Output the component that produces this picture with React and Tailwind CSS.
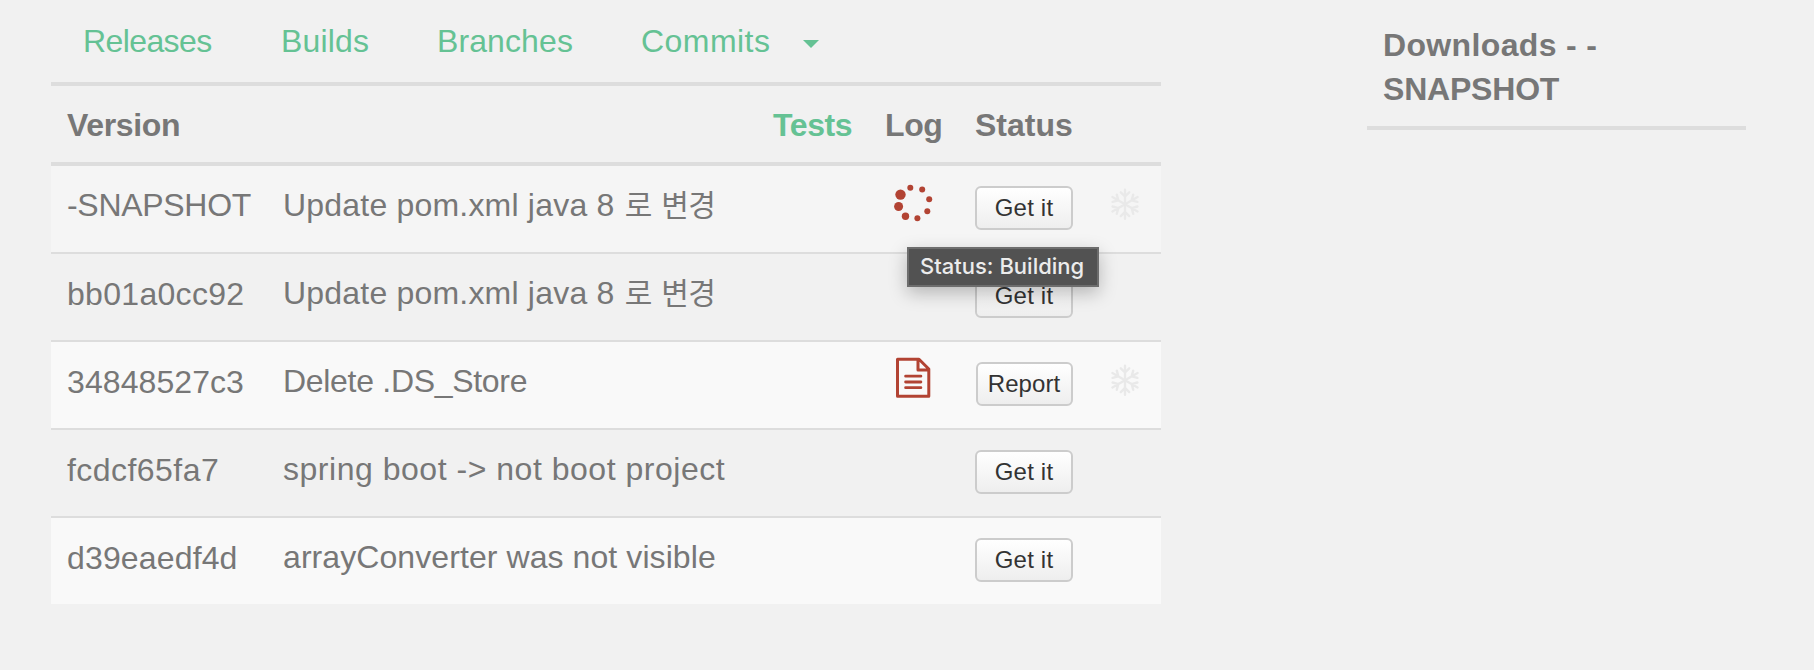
const rows = [
  { version: "-SNAPSHOT", vt: "tracking-[-0.3px] pt-[31px]", message: "Update pom.xml java 8", korean: ["로", "변경"], mt: "tracking-[0.2px]", log: "building", action: "Get it", frozen: true, bg: "bg-[#f5f5f5]" },
  { version: "bb01a0cc92", vt: "tracking-[0.3px] pt-8", message: "Update pom.xml java 8", korean: ["로", "변경"], mt: "tracking-[0.2px]", action: "Get it", bg: "" },
  { version: "34848527c3", vt: "tracking-[0.08px] pt-8", message: "Delete .DS_Store", mt: "tracking-[-0.3px]", log: "report", action: "Report", frozen: true, bg: "bg-[#f9f9f9]" },
  { version: "fcdcf65fa7", vt: "tracking-[0.45px] pt-8", message: "spring boot -> not boot project", mt: "tracking-[0.52px]", action: "Get it", bg: "" },
  { version: "d39eaedf4d", vt: "tracking-[0.15px] pt-8", message: "arrayConverter was not visible", mt: "tracking-[0.08px]", action: "Get it", bg: "bg-[#f9f9f9]" },
];

function Spinner() {
  const dots = [
    [25.3, 12.7, 3], [37.2, 14.5, 3], [44.2, 24.3, 3], [42.3, 36.2, 3],
    [32.4, 43.3, 3], [20.5, 41.2, 3.7], [13.6, 31.5, 4.5], [15.5, 19.6, 5.2],
  ];
  return (
    <svg width="60" height="60" viewBox="0 0 60 60" fill="#b24333" className="mt-[9px] ml-[5px]">
      {dots.map(([x, y, r]) => <circle key={x} cx={x} cy={y} r={r} />)}
    </svg>
  );
}

function Document() {
  return (
    <svg width="60" height="60" viewBox="0 0 60 60" fill="none" stroke="#b24333" strokeWidth="3" strokeLinejoin="round" strokeLinecap="round" className="mt-[3px] ml-[5px]">
      <path d="M12.5 14.2H34L43.8 24V51.2H12.5ZM33 14.2V24.9H43.8" />
      <path d="M20.6 31.2H35.9M20.6 37H35.9M20.6 42.7H35.9" strokeWidth="2.8" />
    </svg>
  );
}

function Snowflake() {
  return (
    <svg width="50" height="50" viewBox="0 0 50 50" fill="none" stroke="#e9e9e9" strokeWidth="2.4" strokeLinecap="round" className="mt-[14px]">
      {[0, 60, 120, 180, 240, 300].map((a) => (
        <path key={a} transform={`rotate(${a} 25 24.2)`} d="M25 24.2V9.7M25 16.5L20.8 12.3M25 16.5L29.2 12.3" />
      ))}
    </svg>
  );
}

function Action({ label }) {
  const narrow = label === "Report";
  return (
    <button className={`flex h-11 justify-center rounded-[6px] border-2 border-[#ccc] bg-linear-to-b from-white to-[#eee] pt-[6px] text-2xl leading-[28px] text-[#333] ${narrow ? "ml-px w-[97px] pr-px tracking-[0.05px]" : "w-[98px] tracking-[0.2px]"}`}>
      {label}
    </button>
  );
}

export default function App() {
  return (
    <div className="flex h-[670px] w-[1814px] bg-[#f1f1f1] pl-[51px] font-['Liberation_Sans','Noto_Sans_CJK_KR',sans-serif] text-[32px] leading-[36px] text-[#777]">
      <main className="w-[1110px]">
        <nav className="flex h-[86px] border-b-4 border-[#ddd] pt-[23px] pl-8 text-[#65c294]">
          <a className="w-[198px] tracking-[-0.6px]">Releases</a>
          <a className="w-[156px] tracking-[0.15px]">Builds</a>
          <a className="w-[204px] tracking-[0.1px]">Branches</a>
          <a className="w-[162px] tracking-[0.45px]">Commits</a>
          <svg width="16" height="8" viewBox="0 0 16 8" fill="currentColor" className="mt-[17px]">
            <path d="M0 0H16L8 8Z" />
          </svg>
        </nav>
        <div className="flex h-20 border-b-4 border-[#ddd] pt-[21px] pl-4 font-bold">
          <span className="w-[706px] tracking-[-0.35px]">Version</span>
          <span className="w-[112px] tracking-[-0.4px] text-[#65c294]">Tests</span>
          <span className="w-[90px] tracking-[-0.4px]">Log</span>
          <span>Status</span>
        </div>
        <div className="relative">
          {rows.map((row, i) => (
            <div key={row.version} className={`flex w-full ${i < 4 ? "h-[88px] border-b-2 border-[#ddd]" : "h-[86px]"} ${row.bg}`}>
              <div className={`-mt-[10px] w-[232px] whitespace-nowrap pl-4 ${row.vt}`}>
                {row.version}
              </div>
              <div className={`w-[597px] whitespace-nowrap pt-[21px] ${row.mt}`}>
                {row.message}
                {row.korean && (
                  <span className="ml-px text-[30px] leading-none tracking-[-0.5px] [word-spacing:1.5px]"> {row.korean.join(" ")}</span>
                )}
              </div>
              <div className="w-[95px]">
                {row.log === "building" && <Spinner />}
                {row.log === "report" && <Document />}
              </div>
              <div className="w-[125px] pt-5"><Action label={row.action} /></div>
              {row.frozen && <Snowflake />}
            </div>
          ))}
          <div className="absolute top-[81px] left-[856px] h-10 w-48 border-2 border-[#6d6d6d] bg-[#525252] pl-[11px] font-[Inter] text-[22px] leading-[35px] font-medium whitespace-nowrap text-[#ececec] shadow-[0_6px_18px_rgba(0,0,0,0.25)]">
            Status: Building
          </div>
        </div>
      </main>
      <aside className="ml-[206px] h-[130px] w-[379px] border-b-4 border-[#ddd] pt-[23px] pl-4 leading-[44px] font-bold">
        <span className="tracking-[0.35px]">Downloads - -</span><br /><span className="tracking-[-0.2px]">SNAPSHOT</span>
      </aside>
    </div>
  );
}
